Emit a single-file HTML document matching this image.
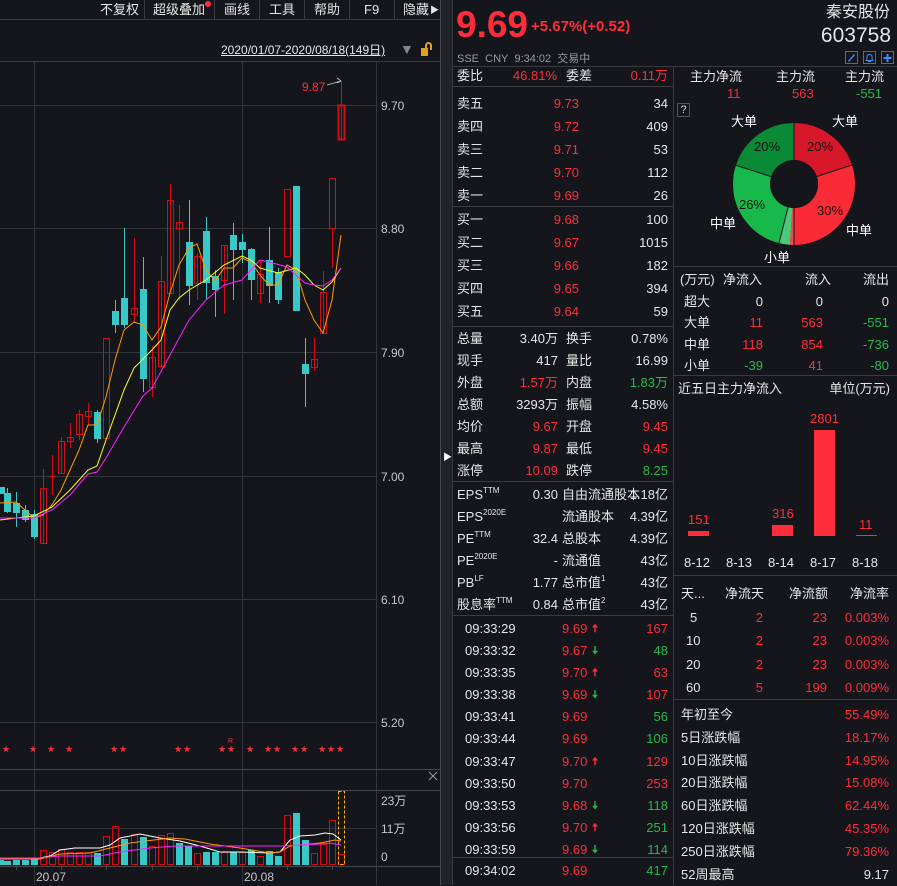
<!DOCTYPE html>
<html><head><meta charset="utf-8"><style>
*{margin:0;padding:0;box-sizing:border-box}
body{width:897px;height:885px;background:#14161b;overflow:hidden;position:relative;font-family:"Liberation Sans","Noto Sans CJK SC",sans-serif;font-size:13px;color:#dcdcdc}
.a{position:absolute;white-space:nowrap;line-height:16px}
.r{color:#ff2d3a}.g{color:#25b94a}.w{color:#e6e6e6}.gy{color:#9a9a9a}
.hl{position:absolute;height:1px;background:#393b40}
.vl{position:absolute;width:1px;background:#393b40}
.ra{text-align:right}
sup{font-size:8px;vertical-align:6px;line-height:0}
.fin>div{height:22px;overflow:visible;position:relative}
.ar{font-size:11px;font-weight:bold}
</style></head><body>

<!-- toolbar -->
<div class="hl" style="left:0;top:19px;width:440px"></div>
<div class="a w" style="left:100px;top:2px">不复权</div>
<div class="vl" style="left:144px;top:0;height:19px"></div>
<div class="a w" style="left:153px;top:2px">超级叠加</div>
<div style="position:absolute;left:205px;top:1px;width:6px;height:6px;border-radius:3px;background:#ff2d3a"></div>
<div class="vl" style="left:214px;top:0;height:19px"></div>
<div class="a w" style="left:224px;top:2px">画线</div>
<div class="vl" style="left:259px;top:0;height:19px"></div>
<div class="a w" style="left:269px;top:2px">工具</div>
<div class="vl" style="left:304px;top:0;height:19px"></div>
<div class="a w" style="left:314px;top:2px">帮助</div>
<div class="vl" style="left:349px;top:0;height:19px"></div>
<div class="a w" style="left:364px;top:2px">F9</div>
<div class="vl" style="left:394px;top:0;height:19px"></div>
<div class="a w" style="left:403px;top:2px">隐藏</div>
<div class="a w" style="left:430px;top:2px;font-size:9px">▶</div>
<div class="a w" style="left:221px;top:42px;font-size:12px;text-decoration:underline">2020/01/07-2020/08/18(149日)</div>
<div class="a" style="left:400px;top:41px;color:#888;font-size:14px">▼</div>
<div style="position:absolute;left:421px;top:48px;width:7px;height:8px;background:#e0a020"></div>
<div style="position:absolute;left:425px;top:42px;width:7px;height:8px;border:2px solid #e0a020;border-bottom:none;border-radius:4px 4px 0 0"></div>
<div class="hl" style="left:0;top:61px;width:440px"></div>

<!-- chart svg -->
<svg style="position:absolute;left:0;top:0" width="441" height="885">
<g stroke="#34363b" stroke-width="1">
<line x1="34.5" y1="62" x2="34.5" y2="885"/><line x1="242.5" y1="62" x2="242.5" y2="885"/>
<line x1="376.5" y1="62" x2="376.5" y2="885"/>
<line x1="0" y1="105.5" x2="376" y2="105.5"/><line x1="0" y1="228.5" x2="376" y2="228.5"/>
<line x1="0" y1="352.5" x2="376" y2="352.5"/><line x1="0" y1="476.5" x2="376" y2="476.5"/>
<line x1="0" y1="599.5" x2="376" y2="599.5"/><line x1="0" y1="722.5" x2="376" y2="722.5"/>
<line x1="0" y1="828.5" x2="376" y2="828.5"/>
</g>
<g stroke="#46484d"><line x1="0" y1="769.5" x2="440" y2="769.5"/><line x1="0" y1="790.5" x2="440" y2="790.5"/><line x1="0" y1="866.5" x2="440" y2="866.5"/>
<line x1="440.5" y1="0" x2="440.5" y2="885"/></g>
<g stroke="#46484d"><line x1="16.5" y1="866" x2="16.5" y2="870"/><line x1="61.5" y1="866" x2="61.5" y2="870"/><line x1="106.5" y1="866" x2="106.5" y2="870"/><line x1="152.5" y1="866" x2="152.5" y2="870"/><line x1="197.5" y1="866" x2="197.5" y2="870"/><line x1="287.5" y1="866" x2="287.5" y2="870"/><line x1="332.5" y1="866" x2="332.5" y2="870"/></g>
<path d="M429 772 L437 780 M437 772 L429 780" stroke="#999" stroke-width="1"/>
<g font-family="Liberation Sans" font-size="12" fill="#c8c8c8">
<text x="381" y="110">9.70</text><text x="381" y="233">8.80</text><text x="381" y="357">7.90</text><text x="381" y="481">7.00</text><text x="381" y="604">6.10</text><text x="381" y="727">5.20</text>
<text x="381" y="805">23万</text><text x="381" y="833">11万</text><text x="381" y="861">0</text>
<text x="36" y="881">20.07</text><text x="244" y="881">20.08</text>
<text x="302" y="91" fill="#ff2d3a">9.87</text>
</g>
<path d="M327 85 L341 81 M337 78 L341 81 L337 83" stroke="#ccc" fill="none" stroke-width="0.8"/>
<g stroke-width="1" fill="none">
<g stroke="#d40d12">
<line x1="43.5" y1="469" x2="43.5" y2="544"/><rect x="40.5" y="488.5" width="6" height="55"/>
<line x1="52.5" y1="455" x2="52.5" y2="495"/><line x1="49" y1="476.5" x2="56" y2="476.5"/>
<line x1="61.5" y1="437" x2="61.5" y2="473"/><rect x="58.5" y="441.5" width="6" height="32"/>
<line x1="70.5" y1="423" x2="70.5" y2="448"/><rect x="67.5" y="437.5" width="6" height="4"/>
<line x1="79.5" y1="410" x2="79.5" y2="440"/><rect x="76.5" y="414.5" width="6" height="20"/>
<line x1="88.5" y1="403" x2="88.5" y2="425"/><rect x="85.5" y="411.5" width="6" height="5"/>
<rect x="103.5" y="338.5" width="6" height="100"/>
<line x1="134.5" y1="238" x2="134.5" y2="322"/><rect x="131.5" y="308.5" width="6" height="6"/>
<line x1="152.5" y1="346" x2="152.5" y2="397"/><rect x="149.5" y="357.5" width="6" height="30"/>
<line x1="161.5" y1="256" x2="161.5" y2="366"/><rect x="158.5" y="281.5" width="6" height="85"/>
<line x1="170.5" y1="184" x2="170.5" y2="293"/><rect x="167.5" y="200.5" width="6" height="93"/>
<line x1="179.5" y1="205" x2="179.5" y2="300"/><rect x="176.5" y="222.5" width="6" height="6"/>
<line x1="197.5" y1="253" x2="197.5" y2="300"/><rect x="194.5" y="256.5" width="6" height="27"/>
<line x1="224.5" y1="245" x2="224.5" y2="314"/><rect x="221.5" y="245.5" width="6" height="35"/>
<line x1="260.5" y1="260" x2="260.5" y2="303"/><rect x="257.5" y="274.5" width="6" height="19"/>
<rect x="284.5" y="189.5" width="6" height="67"/>
<line x1="314.5" y1="338" x2="314.5" y2="371"/><rect x="311.5" y="359.5" width="6" height="8"/>
<line x1="323.5" y1="271" x2="323.5" y2="333"/><rect x="320.5" y="292.5" width="6" height="41"/>
<line x1="332.5" y1="228" x2="332.5" y2="268"/><rect x="329.5" y="178.5" width="6" height="50"/>
<line x1="341.5" y1="81" x2="341.5" y2="139"/><rect x="338.5" y="105.5" width="6" height="34" stroke-width="2"/>
</g>
<g stroke="#38c8c8">
<line x1="7.5" y1="488" x2="7.5" y2="513"/><line x1="16.5" y1="492" x2="16.5" y2="527"/><line x1="25.5" y1="505" x2="25.5" y2="522"/><line x1="34.5" y1="510" x2="34.5" y2="539"/>
<line x1="97.5" y1="410" x2="97.5" y2="443"/><line x1="115.5" y1="300" x2="115.5" y2="333"/><line x1="124.5" y1="228" x2="124.5" y2="328"/>
<line x1="143.5" y1="257" x2="143.5" y2="392"/><line x1="189.5" y1="200" x2="189.5" y2="305"/><line x1="206.5" y1="217" x2="206.5" y2="300"/>
<line x1="215.5" y1="270" x2="215.5" y2="317"/><line x1="233.5" y1="223" x2="233.5" y2="300"/><line x1="242.5" y1="234" x2="242.5" y2="263"/>
<line x1="251.5" y1="248" x2="251.5" y2="300"/><line x1="269.5" y1="227" x2="269.5" y2="303"/><line x1="278.5" y1="268" x2="278.5" y2="304"/>
<line x1="305.5" y1="338" x2="305.5" y2="407"/>
</g>
</g>
<g fill="#38c8c8">
<rect x="0" y="487" width="5" height="7"/><rect x="4" y="493" width="7" height="19"/><rect x="13" y="503" width="7" height="10"/><rect x="22" y="510" width="7" height="10"/><rect x="31" y="514" width="7" height="23"/>
<rect x="94" y="412" width="7" height="27"/><rect x="112" y="311" width="7" height="14"/><rect x="121" y="298" width="7" height="27"/>
<rect x="140" y="289" width="7" height="90"/><rect x="186" y="242" width="7" height="44"/><rect x="203" y="231" width="7" height="52"/>
<rect x="212" y="276" width="7" height="14"/><rect x="230" y="235" width="7" height="15"/><rect x="239" y="242" width="7" height="8"/>
<rect x="248" y="249" width="7" height="31"/><rect x="266" y="260" width="7" height="26"/><rect x="275" y="272" width="7" height="28"/>
<rect x="293" y="186" width="7" height="125"/><rect x="302" y="364" width="7" height="10"/>
</g>
<polyline fill="none" stroke="#ff9a00" stroke-width="1" points="0,503 16,502 25,510 34,518 43,515 52,505 61,490 70,470 79,450 88,425 97,425 106,397 115,360 124,330 134,322 143,325 152,340 161,327 170,293 179,265 189,248 197,244 206,270 215,281 224,268 233,268 242,258 251,262 260,275 269,285 278,285 287,265 296,270 305,300 314,320 323,333 332,300 341,235"/>
<polyline fill="none" stroke="#ffff20" stroke-width="1" points="0,520 16,518 34,516 52,507 70,490 88,470 97,466 106,440 124,390 134,368 152,350 161,340 170,310 179,298 189,290 206,280 224,265 242,256 251,260 260,268 278,273 296,268 305,275 314,285 323,290 332,282 341,268"/>
<polyline fill="none" stroke="#ff20ff" stroke-width="1" points="0,518 16,518 34,518 43,514 52,510 70,495 88,474 97,472 106,458 124,427 143,396 152,388 170,355 189,320 206,300 224,285 242,280 260,260 269,262 287,267 305,283 314,285 323,286 332,280 341,268"/>
<g fill="#ff2d3a" font-size="9" font-family="DejaVu Sans">
<text x="2" y="752">★</text><text x="29" y="752">★</text><text x="47" y="752">★</text><text x="65" y="752">★</text><text x="110" y="752">★</text><text x="119" y="752">★</text><text x="174" y="752">★</text><text x="183" y="752">★</text><text x="218" y="752">★</text><text x="227" y="752">★</text><text x="246" y="752">★</text><text x="264" y="752">★</text><text x="273" y="752">★</text><text x="291" y="752">★</text><text x="300" y="752">★</text><text x="318" y="752">★</text><text x="327" y="752">★</text><text x="336" y="752">★</text>
<text x="228" y="743" font-size="7" font-family="Liberation Sans">R</text>
</g>
<g fill="#38c8c8">
<rect x="0" y="860" width="4" height="5"/><rect x="4" y="861" width="7" height="4"/><rect x="13" y="860" width="7" height="5"/><rect x="22" y="860" width="7" height="5"/><rect x="31" y="858" width="7" height="7"/>
<rect x="94" y="853" width="7" height="12"/><rect x="121" y="839" width="7" height="26"/><rect x="140" y="837" width="7" height="28"/><rect x="176" y="843" width="7" height="22"/><rect x="185" y="846" width="7" height="19"/>
<rect x="203" y="852" width="7" height="13"/><rect x="212" y="852" width="7" height="13"/><rect x="230" y="852" width="7" height="13"/><rect x="248" y="850" width="7" height="15"/><rect x="266" y="851" width="7" height="14"/><rect x="275" y="856" width="7" height="9"/><rect x="293" y="813" width="7" height="52"/><rect x="302" y="840" width="7" height="25"/>
</g>
<g fill="none" stroke="#d40d12">
<rect x="40.5" y="850.5" width="6" height="14"/><rect x="49.5" y="852.5" width="6" height="12"/><rect x="58.5" y="849.5" width="6" height="15"/><rect x="67.5" y="852.5" width="6" height="12"/><rect x="76.5" y="852.5" width="6" height="12"/><rect x="85.5" y="852.5" width="6" height="12"/>
<rect x="103.5" y="836.5" width="6" height="28"/><rect x="112.5" y="826.5" width="6" height="38"/><rect x="131.5" y="834.5" width="6" height="30"/><rect x="149.5" y="846.5" width="6" height="18"/><rect x="158.5" y="835.5" width="6" height="29"/><rect x="167.5" y="833.5" width="6" height="31"/>
<rect x="194.5" y="853.5" width="6" height="11"/><rect x="221.5" y="852.5" width="6" height="12"/><rect x="239.5" y="852.5" width="6" height="12"/><rect x="257.5" y="856.5" width="6" height="8"/><rect x="284.5" y="815.5" width="6" height="49"/>
<rect x="311.5" y="853.5" width="6" height="11"/><rect x="320.5" y="844.5" width="6" height="20"/><rect x="329.5" y="820.5" width="6" height="44"/><rect x="338.5" y="854.5" width="6" height="10"/>
</g>
<rect x="338.5" y="791.5" width="6" height="73" fill="none" stroke="#ffb400" stroke-dasharray="3,2"/>
<polyline fill="none" stroke="#fff" points="0,858 40,858 50,856 60,850 75,848 100,848 110,845 120,838 140,834 145,835 160,838 180,841 200,846 220,852 240,852 270,853 280,852 290,840 300,836 315,835 325,833 333,834 341,840"/>
<polyline fill="none" stroke="#ff9a00" points="0,859 40,859 60,854 90,853 110,848 130,843 170,838 185,839 210,844 240,848 270,853 280,852 290,846 320,843 335,840 341,841"/>
<polyline fill="none" stroke="#ff20ff" points="0,858 40,858 60,856 100,856 120,852 150,848 175,846 200,846 283,846 300,845 320,844 330,843 341,845"/>
</svg>

<div style="position:absolute;left:441px;top:0;width:11px;height:885px;background:#202227"></div>
<div class="a" style="left:443px;top:449px;color:#fff;font-size:9px">▶</div>

<div class="vl" style="left:452px;top:0;height:885px"></div>
<div class="a r" style="left:456px;top:4px;font-size:37px;font-weight:bold;line-height:42px">9.69</div>
<div class="a r" style="left:531px;top:19px;font-size:15px;font-weight:bold">+5.67%(+0.52)</div>
<div class="a w" style="right:7px;top:3px;font-size:16px;line-height:20px">秦安股份</div>
<div class="a w" style="right:6px;top:23px;font-size:21px;line-height:26px">603758</div>
<div class="a gy" style="left:457px;top:53px;font-size:11px;line-height:13px">SSE&nbsp;&nbsp;CNY&nbsp;&nbsp;9:34:02&nbsp;&nbsp;交易中</div>
<svg style="position:absolute;left:845px;top:51px" width="50" height="14">
<rect x="0.5" y="0.5" width="12" height="12" fill="none" stroke="#3a6cd0"/><path d="M3 10 L9 3 L10 4 L4 11Z" fill="#3a8cff"/>
<rect x="18.5" y="0.5" width="12" height="12" fill="none" stroke="#3a6cd0"/><path d="M21 9.5 L22 8 L22 5 Q24.5 1.5 27 5 L27 8 L28 9.5Z M23 10.5 L26 10.5" fill="none" stroke="#3a8cff"/>
<rect x="36.5" y="0.5" width="12" height="12" fill="none" stroke="#3a6cd0"/><path d="M42.5 3 V11 M38.5 7 H46.5" stroke="#3a8cff" stroke-width="2"/>
</svg>
<div class="hl" style="left:452px;top:66px;width:445px"></div>
<div class="vl" style="left:673px;top:66px;height:819px"></div>

<div class="a w" style="left:457px;top:68px">委比</div><div class="a r ra" style="left:500px;width:57px;top:68px">46.81%</div>
<div class="a w" style="left:566px;top:68px">委差</div><div class="a r ra" style="left:600px;width:68px;top:68px">0.11万</div>
<div class="hl" style="left:452px;top:86px;width:221px"></div>
<div class="hl" style="left:452px;top:206px;width:221px"></div>
<div class="hl" style="left:452px;top:326px;width:221px"></div>
<div class="hl" style="left:452px;top:481px;width:221px"></div>
<div class="hl" style="left:452px;top:615px;width:221px"></div>
<div class="hl" style="left:452px;top:857px;width:221px"></div>

<div style="position:absolute;left:457px;top:92px;width:211px;line-height:23px" class="w">
<div style="display:flex"><span style="width:60px">卖五</span><span class="r ra" style="width:62px">9.73</span><span class="ra" style="flex:1">34</span></div>
<div style="display:flex"><span style="width:60px">卖四</span><span class="r ra" style="width:62px">9.72</span><span class="ra" style="flex:1">409</span></div>
<div style="display:flex"><span style="width:60px">卖三</span><span class="r ra" style="width:62px">9.71</span><span class="ra" style="flex:1">53</span></div>
<div style="display:flex"><span style="width:60px">卖二</span><span class="r ra" style="width:62px">9.70</span><span class="ra" style="flex:1">112</span></div>
<div style="display:flex"><span style="width:60px">卖一</span><span class="r ra" style="width:62px">9.69</span><span class="ra" style="flex:1">26</span></div>
</div>
<div style="position:absolute;left:457px;top:208px;width:211px;line-height:23px" class="w">
<div style="display:flex"><span style="width:60px">买一</span><span class="r ra" style="width:62px">9.68</span><span class="ra" style="flex:1">100</span></div>
<div style="display:flex"><span style="width:60px">买二</span><span class="r ra" style="width:62px">9.67</span><span class="ra" style="flex:1">1015</span></div>
<div style="display:flex"><span style="width:60px">买三</span><span class="r ra" style="width:62px">9.66</span><span class="ra" style="flex:1">182</span></div>
<div style="display:flex"><span style="width:60px">买四</span><span class="r ra" style="width:62px">9.65</span><span class="ra" style="flex:1">394</span></div>
<div style="display:flex"><span style="width:60px">买五</span><span class="r ra" style="width:62px">9.64</span><span class="ra" style="flex:1">59</span></div>
</div>

<div style="position:absolute;left:457px;top:328px;width:211px;line-height:22px" class="w">
<div style="display:flex"><span style="width:40px">总量</span><span class="ra" style="width:61px">3.40万</span><span style="width:8px"></span><span style="width:40px">换手</span><span class="ra" style="flex:1">0.78%</span></div>
<div style="display:flex"><span style="width:40px">现手</span><span class="ra" style="width:61px">417</span><span style="width:8px"></span><span style="width:40px">量比</span><span class="ra" style="flex:1">16.99</span></div>
<div style="display:flex"><span style="width:40px">外盘</span><span class="ra r" style="width:61px">1.57万</span><span style="width:8px"></span><span style="width:40px">内盘</span><span class="ra g" style="flex:1">1.83万</span></div>
<div style="display:flex"><span style="width:40px">总额</span><span class="ra" style="width:61px">3293万</span><span style="width:8px"></span><span style="width:40px">振幅</span><span class="ra" style="flex:1">4.58%</span></div>
<div style="display:flex"><span style="width:40px">均价</span><span class="ra r" style="width:61px">9.67</span><span style="width:8px"></span><span style="width:40px">开盘</span><span class="ra r" style="flex:1">9.45</span></div>
<div style="display:flex"><span style="width:40px">最高</span><span class="ra r" style="width:61px">9.87</span><span style="width:8px"></span><span style="width:40px">最低</span><span class="ra r" style="flex:1">9.45</span></div>
<div style="display:flex"><span style="width:40px">涨停</span><span class="ra r" style="width:61px">10.09</span><span style="width:8px"></span><span style="width:40px">跌停</span><span class="ra g" style="flex:1">8.25</span></div>
</div>

<div class="fin w" style="position:absolute;left:457px;top:484px;width:211px;line-height:22px">
<div style="display:flex"><span style="width:60px">EPS<sup>TTM</sup></span><span class="ra" style="width:41px">0.30</span><span style="width:4px"></span><span style="flex:1">自由流通股本</span><span class="ra" style="position:absolute;right:0">1.18亿</span></div>
<div style="display:flex"><span style="width:60px">EPS<sup>2020E</sup></span><span class="ra" style="width:41px"></span><span style="width:4px"></span><span style="flex:1">流通股本</span><span class="ra">4.39亿</span></div>
<div style="display:flex"><span style="width:60px">PE<sup>TTM</sup></span><span class="ra" style="width:41px">32.4</span><span style="width:4px"></span><span style="flex:1">总股本</span><span class="ra">4.39亿</span></div>
<div style="display:flex"><span style="width:60px">PE<sup>2020E</sup></span><span class="ra" style="width:41px">-</span><span style="width:4px"></span><span style="flex:1">流通值</span><span class="ra">43亿</span></div>
<div style="display:flex"><span style="width:60px">PB<sup>LF</sup></span><span class="ra" style="width:41px">1.77</span><span style="width:4px"></span><span style="flex:1">总市值<sup>1</sup></span><span class="ra">43亿</span></div>
<div style="display:flex"><span style="width:60px">股息率<sup>TTM</sup></span><span class="ra" style="width:41px">0.84</span><span style="width:4px"></span><span style="flex:1">总市值<sup>2</sup></span><span class="ra">43亿</span></div>
</div>

<div style="position:absolute;left:465px;top:618px;width:203px;line-height:22.1px" class="w">
<div style="display:flex"><span style="width:97px">09:33:29</span><span class="r" style="width:30px">9.69</span><span class="r ar" style="width:20px">🠅</span><span class="ra r" style="flex:1">167</span></div>
<div style="display:flex"><span style="width:97px">09:33:32</span><span class="r" style="width:30px">9.67</span><span class="g ar" style="width:20px">🠇</span><span class="ra g" style="flex:1">48</span></div>
<div style="display:flex"><span style="width:97px">09:33:35</span><span class="r" style="width:30px">9.70</span><span class="r ar" style="width:20px">🠅</span><span class="ra r" style="flex:1">63</span></div>
<div style="display:flex"><span style="width:97px">09:33:38</span><span class="r" style="width:30px">9.69</span><span class="g ar" style="width:20px">🠇</span><span class="ra r" style="flex:1">107</span></div>
<div style="display:flex"><span style="width:97px">09:33:41</span><span class="r" style="width:30px">9.69</span><span style="width:20px"></span><span class="ra g" style="flex:1">56</span></div>
<div style="display:flex"><span style="width:97px">09:33:44</span><span class="r" style="width:30px">9.69</span><span style="width:20px"></span><span class="ra g" style="flex:1">106</span></div>
<div style="display:flex"><span style="width:97px">09:33:47</span><span class="r" style="width:30px">9.70</span><span class="r ar" style="width:20px">🠅</span><span class="ra r" style="flex:1">129</span></div>
<div style="display:flex"><span style="width:97px">09:33:50</span><span class="r" style="width:30px">9.70</span><span style="width:20px"></span><span class="ra r" style="flex:1">253</span></div>
<div style="display:flex"><span style="width:97px">09:33:53</span><span class="r" style="width:30px">9.68</span><span class="g ar" style="width:20px">🠇</span><span class="ra g" style="flex:1">118</span></div>
<div style="display:flex"><span style="width:97px">09:33:56</span><span class="r" style="width:30px">9.70</span><span class="r ar" style="width:20px">🠅</span><span class="ra g" style="flex:1">251</span></div>
<div style="display:flex"><span style="width:97px">09:33:59</span><span class="r" style="width:30px">9.69</span><span class="g ar" style="width:20px">🠇</span><span class="ra g" style="flex:1">114</span></div>
</div>
<div style="position:absolute;left:465px;top:863px;width:203px;line-height:16px;display:flex" class="w"><span style="width:97px">09:34:02</span><span class="r" style="width:50px">9.69</span><span class="ra g" style="flex:1">417</span></div>

<div class="a w" style="left:690px;top:69px">主力净流</div>
<div class="a w" style="left:776px;top:69px">主力流</div>
<div class="a w" style="left:845px;top:69px">主力流</div>
<div class="a r" style="left:727px;top:86px">11</div>
<div class="a r" style="left:792px;top:86px">563</div>
<div class="a g" style="left:856px;top:86px">-551</div>
<div style="position:absolute;left:677px;top:103px;width:13px;height:14px;border:1px solid #555;color:#ccc;font-size:11px;line-height:12px;text-align:center">?</div>
<svg style="position:absolute;left:730px;top:120px" width="130" height="130">
<g transform="rotate(-90 64 64)" fill="none" stroke-width="37">
<circle cx="64" cy="64" r="42.5" stroke="#d7172a" stroke-dasharray="53.4 300" stroke-dashoffset="0"/>
<circle cx="64" cy="64" r="42.5" stroke="#fb2a37" stroke-dasharray="80.1 300" stroke-dashoffset="-53.4"/>
<circle cx="64" cy="64" r="42.5" stroke="#f04a55" stroke-dasharray="2.7 300" stroke-dashoffset="-133.5"/>
<circle cx="64" cy="64" r="42.5" stroke="#4ec77a" stroke-dasharray="8 300" stroke-dashoffset="-136.2"/>
<circle cx="64" cy="64" r="42.5" stroke="#18b94b" stroke-dasharray="69.4 300" stroke-dashoffset="-144.2"/>
<circle cx="64" cy="64" r="42.5" stroke="#0b8a35" stroke-dasharray="53.4 300" stroke-dashoffset="-213.6"/>
</g>
<g stroke="#14161b" stroke-width="1">
<line x1="64" y1="64" x2="64" y2="3"/><line x1="64" y1="64" x2="122" y2="45"/><line x1="64" y1="64" x2="64" y2="125"/><line x1="64" y1="64" x2="5" y2="45"/><line x1="64" y1="64" x2="49" y2="123"/>
</g>
<circle cx="64" cy="64" r="24" fill="#14161b"/>
</svg>
<div class="a" style="left:731px;top:114px;color:#fff">大单</div>
<div class="a" style="left:832px;top:114px;color:#fff">大单</div>
<div class="a" style="left:754px;top:139px;color:#111">20%</div>
<div class="a" style="left:807px;top:139px;color:#111">20%</div>
<div class="a" style="left:739px;top:197px;color:#111">26%</div>
<div class="a" style="left:817px;top:203px;color:#111">30%</div>
<div class="a" style="left:710px;top:216px;color:#fff">中单</div>
<div class="a" style="left:846px;top:223px;color:#fff">中单</div>
<div class="a" style="left:764px;top:250px;color:#fff">小单</div>
<div class="hl" style="left:673px;top:266px;width:224px"></div>

<div style="position:absolute;left:680px;top:269px;width:209px;line-height:21.5px" class="w">
<div style="display:flex"><span style="width:43px">(万元)</span><span style="width:60px">净流入</span><span class="ra" style="width:48px">流入</span><span class="ra" style="flex:1">流出</span></div>
<div style="display:flex"><span style="width:43px;padding-left:4px">超大</span><span class="ra" style="width:40px">0</span><span class="ra" style="width:60px">0</span><span class="ra" style="flex:1">0</span></div>
<div style="display:flex"><span style="width:43px;padding-left:4px">大单</span><span class="ra r" style="width:40px">11</span><span class="ra r" style="width:60px">563</span><span class="ra g" style="flex:1">-551</span></div>
<div style="display:flex"><span style="width:43px;padding-left:4px">中单</span><span class="ra r" style="width:40px">118</span><span class="ra r" style="width:60px">854</span><span class="ra g" style="flex:1">-736</span></div>
<div style="display:flex"><span style="width:43px;padding-left:4px">小单</span><span class="ra g" style="width:40px">-39</span><span class="ra r" style="width:60px">41</span><span class="ra g" style="flex:1">-80</span></div>
</div>
<div class="hl" style="left:673px;top:375px;width:224px"></div>
<div class="a w" style="left:678px;top:381px">近五日主力净流入</div>
<div class="a w" style="right:7px;top:381px">单位(万元)</div>
<div style="position:absolute;left:688px;top:531px;width:21px;height:5px;background:#ff2d3a"></div>
<div style="position:absolute;left:772px;top:525px;width:21px;height:11px;background:#ff2d3a"></div>
<div style="position:absolute;left:814px;top:430px;width:21px;height:106px;background:#ff2d3a"></div>
<div style="position:absolute;left:856px;top:535px;width:21px;height:1px;background:#ff2d3a"></div>
<div class="a r" style="left:688px;top:512px">151</div>
<div class="a r" style="left:772px;top:506px">316</div>
<div class="a r" style="left:810px;top:411px">2801</div>
<div class="a r" style="left:859px;top:517px">11</div>
<div class="a w" style="left:684px;top:555px">8-12</div>
<div class="a w" style="left:726px;top:555px">8-13</div>
<div class="a w" style="left:768px;top:555px">8-14</div>
<div class="a w" style="left:810px;top:555px">8-17</div>
<div class="a w" style="left:852px;top:555px">8-18</div>
<div class="hl" style="left:673px;top:575px;width:224px"></div>

<div style="position:absolute;left:681px;top:582px;width:208px;line-height:23.5px" class="w">
<div style="display:flex"><span style="width:44px">天...</span><span style="width:64px">净流天</span><span style="width:61px">净流额</span><span class="ra" style="flex:1">净流率</span></div>
<div style="display:flex"><span style="width:40px;padding-left:9px">5</span><span class="ra r" style="width:42px">2</span><span class="ra r" style="width:64px">23</span><span class="ra r" style="flex:1">0.003%</span></div>
<div style="display:flex"><span style="width:40px;padding-left:5px">10</span><span class="ra r" style="width:42px">2</span><span class="ra r" style="width:64px">23</span><span class="ra r" style="flex:1">0.003%</span></div>
<div style="display:flex"><span style="width:40px;padding-left:5px">20</span><span class="ra r" style="width:42px">2</span><span class="ra r" style="width:64px">23</span><span class="ra r" style="flex:1">0.003%</span></div>
<div style="display:flex"><span style="width:40px;padding-left:5px">60</span><span class="ra r" style="width:42px">5</span><span class="ra r" style="width:64px">199</span><span class="ra r" style="flex:1">0.009%</span></div>
</div>
<div class="hl" style="left:673px;top:699px;width:224px"></div>
<div style="position:absolute;left:681px;top:704px;width:208px;line-height:22.8px" class="w">
<div style="display:flex;justify-content:space-between"><span>年初至今</span><span class="r">55.49%</span></div>
<div style="display:flex;justify-content:space-between"><span>5日涨跌幅</span><span class="r">18.17%</span></div>
<div style="display:flex;justify-content:space-between"><span>10日涨跌幅</span><span class="r">14.95%</span></div>
<div style="display:flex;justify-content:space-between"><span>20日涨跌幅</span><span class="r">15.08%</span></div>
<div style="display:flex;justify-content:space-between"><span>60日涨跌幅</span><span class="r">62.44%</span></div>
<div style="display:flex;justify-content:space-between"><span>120日涨跌幅</span><span class="r">45.35%</span></div>
<div style="display:flex;justify-content:space-between"><span>250日涨跌幅</span><span class="r">79.36%</span></div>
<div style="display:flex;justify-content:space-between"><span>52周最高</span><span>9.17</span></div>
</div>
</body></html>
